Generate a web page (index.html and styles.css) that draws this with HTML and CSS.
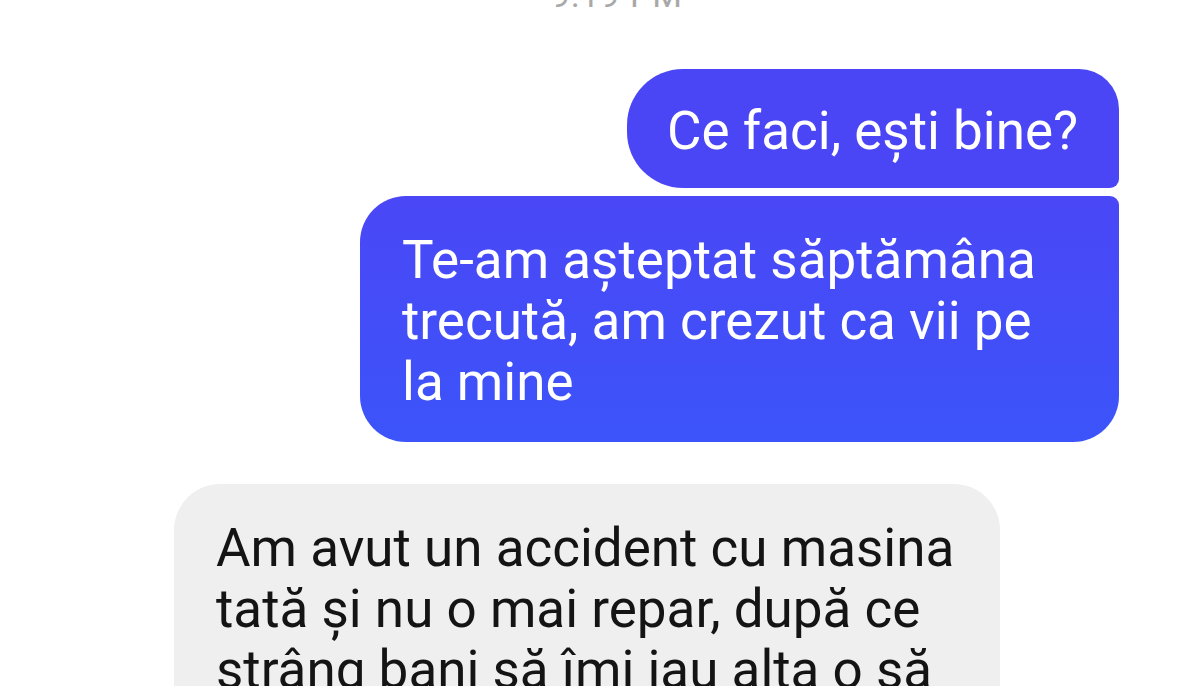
FILE: index.html
```html
<!DOCTYPE html>
<html lang="ro">
<head>
<meta charset="utf-8">
<title>Chat</title>
<link rel="stylesheet" href="styles.css">
</head>
<body>
<main class="chat">
  <div class="time">9:19 PM</div>
  <div class="row out first-row">
    <div class="bubble blue first">Ce faci, ești bine?</div>
  </div>
  <div class="row out second-row">
    <div class="bubble blue second">Te-am așteptat săptămâna trecută, am crezut ca vii pe la mine</div>
  </div>
  <div class="row in">
    <div class="bubble grey">Am avut un accident cu masina tată și nu o mai repar, după ce strâng bani să îmi iau alta o să vin din nou la tine</div>
  </div>
</main>
</body>
</html>
```

FILE: styles.css
```css
html, body {
  margin: 0;
  padding: 0;
  background: #ffffff;
  overflow: hidden;
}
body {
  font-family: Roboto, "Noto Sans", sans-serif;
  width: 1200px;
  height: 686px;
}
.chat {
  display: flex;
  flex-direction: column;
}
.time {
  flex: none;
  height: 30px;
  margin-top: -20px;
  padding-left: 34px;
  text-align: center;
  font-size: 34px;
  line-height: 30px;
  color: #a8a8a8;
  letter-spacing: 1px;
}
.row {
  display: flex;
  flex: none;
}
.row.out {
  justify-content: flex-end;
  padding-right: 81px;
}
.first-row {
  margin-top: 59px;
}
.second-row {
  margin-top: 8px;
}
.row.in {
  padding-left: 174px;
  margin-top: 42px;
}
.bubble {
  box-sizing: border-box;
  font-size: 53px;
  line-height: 61px;
}
.blue {
  color: #ffffff;
}
.first {
  width: 492px;
  height: 119px;
  padding: 6px 20px 0 40px;
  display: flex;
  align-items: center;
  white-space: nowrap;
  background: #4b46f5;
  border-radius: 56px 40px 9px 56px;
}
.second {
  width: 759px;
  height: 246px;
  padding: 34px 57px 0 42px;
  background: linear-gradient(180deg, #4a47f6 0%, #3c54fa 100%);
  border-radius: 46px 9px 46px 46px;
}
.grey {
  width: 826px;
  padding: 34px 10px 40px 42px;
  background: #efefef;
  color: #141414;
  border-radius: 46px;
}
```
